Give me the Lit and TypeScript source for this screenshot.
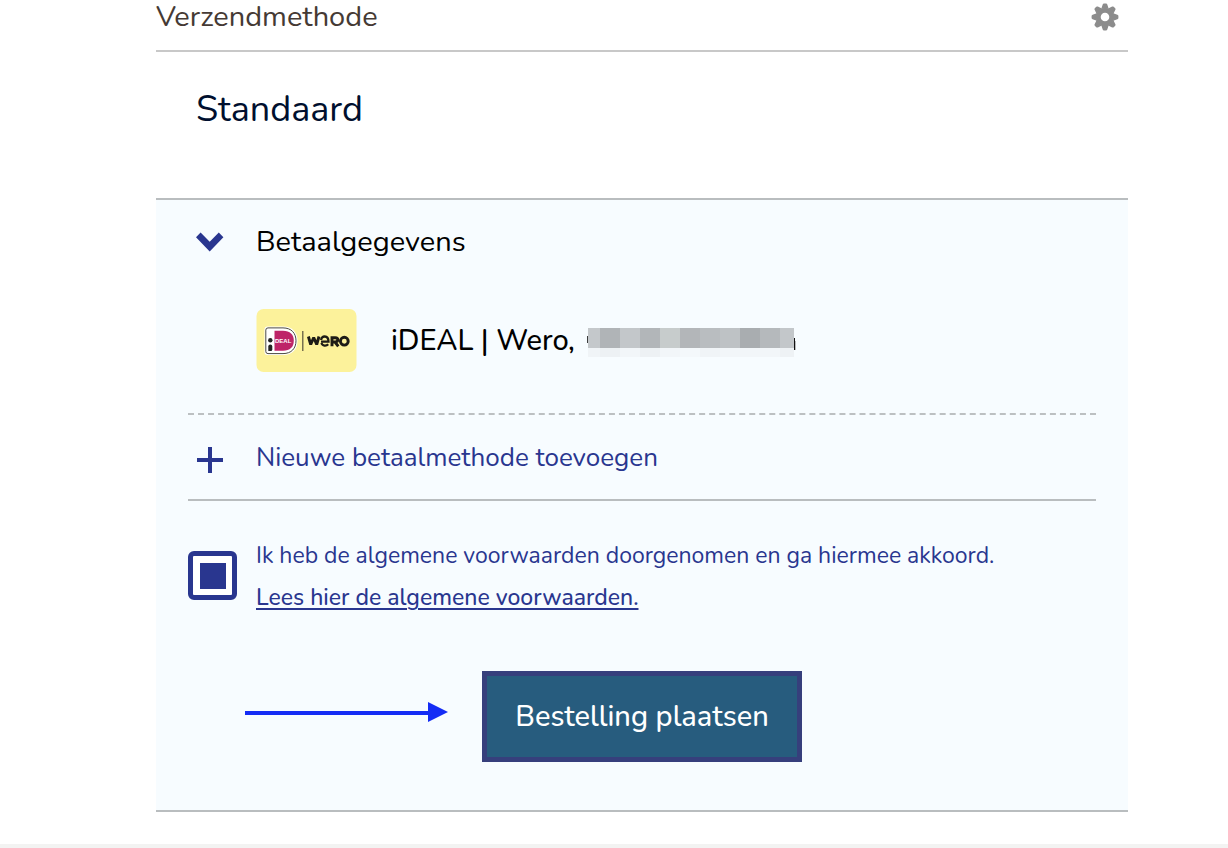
import { LitElement, html, css, svg } from "lit";
import { customElement, state } from "lit/decorators.js";

const MASK_TILES = [
  { x: 1, w: 12, fill: "#c4c8cb", low: "#f0f4f7" },
  { x: 13, w: 20, fill: "#b0b4b7", low: "#edf1f4" },
  { x: 33, w: 20, fill: "#c3c7ca", low: "#f2f6f9" },
  { x: 53, w: 20, fill: "#b2b6b9", low: "#edf1f4" },
  { x: 73, w: 20, fill: "#c7cccc", low: "#f2f6f9" },
  { x: 93, w: 20, fill: "#b3b6b9", low: "#f4f8fb" },
  { x: 113, w: 20, fill: "#b9bdc0", low: "#f0f4f7" },
  { x: 133, w: 20, fill: "#bec2c5", low: "#f2f6f9" },
  { x: 153, w: 20, fill: "#a9adb0", low: "#f2f6f9" },
  { x: 173, w: 20, fill: "#b5b9bc", low: "#f2f6f9" },
  { x: 193, w: 14, fill: "#c3c7ca", low: "#eef2f5" },
];

@customElement("app-root")
export class AppRoot extends LitElement {
  @state() private accepted = true;

  static styles = css`
    :host {
      display: block;
      background: #fff;
      font-family: Nunito, Lato, sans-serif;
      color: #000;
    }
    svg {
      display: block;
      flex: none;
    }
    h2, h3, p {
      margin: 0;
      font-weight: 400;
    }
    button {
      font: inherit;
      cursor: pointer;
      border: 0;
      padding: 0;
      background: none;
    }
    .page {
      padding: 0 100px 32px 156px;
    }
    .head {
      display: flex;
      align-items: center;
      justify-content: space-between;
      padding: 0 8px 16px 0;
      border-bottom: 2px solid #c8c8c8;
    }
    .head h2 {
      font-size: 29px;
      line-height: 34px;
      color: #453a34;
    }
    .method {
      padding: 34px 40px 64px;
      font-size: 36px;
      line-height: 48px;
      color: #000f2e;
    }
    .panel {
      padding: 22px 32px 48px;
      background: #f7fcff;
      border: solid #b9bdbf;
      border-width: 2px 0;
    }
    .row {
      display: grid;
      grid-template-columns: 44px 1fr;
      column-gap: 24px;
      align-items: center;
      width: 100%;
      text-align: left;
    }
    .row svg {
      justify-self: center;
    }
    .toggle {
      font-size: 29px;
      line-height: 40px;
      color: #000;
    }
    .payment {
      display: flex;
      align-items: center;
      padding: 47px 0 40px 68px;
      border-bottom: 2px dashed #bcc0c2;
      font-size: 29px;
      line-height: 40px;
    }
    .payment p {
      margin: 0 12px 0 34px;
      font-weight: 500;
    }
    .add {
      height: 86px;
      border-bottom: 2px solid #b9bdbf;
      font-size: 26px;
      color: #29368f;
    }
    .terms {
      display: flex;
      align-items: flex-start;
      gap: 19px;
      margin-top: 34px;
      font-size: 23px;
      line-height: 42px;
      color: #29368f;
    }
    .terms input {
      appearance: none;
      flex: none;
      box-sizing: border-box;
      width: 49px;
      height: 49px;
      margin: 16px 0 0;
      border: 5px solid #29368f;
      border-radius: 6px;
      background: #fff;
    }
    .terms input:checked {
      background: #fff linear-gradient(#29368f, #29368f) center / 26px 26px no-repeat;
    }
    .terms label {
      display: block;
    }
    .terms a {
      color: inherit;
      font-weight: 500;
      text-decoration-thickness: 2px;
      text-underline-offset: 3px;
    }
    .submit {
      display: grid;
      grid-template-columns: 1fr auto 1fr;
      align-items: center;
      column-gap: 34px;
      margin-top: 52px;
    }
    .submit svg {
      justify-self: end;
    }
    .submit button {
      padding: 19px 28px;
      border: 5px solid #363f7c;
      background: #275c7e;
      color: #fff;
      font-size: 29px;
      font-weight: 500;
      line-height: 43px;
    }
    .foot {
      height: 4px;
      background: #f3f3f2;
    }
    .logo-small {
      font: 700 6px "Liberation Sans", sans-serif;
    }
  `;

  private gear() {
    return html`<svg width="30" height="30" viewBox="0 0 30 30" aria-hidden="true">
      <g fill="#8c8c8c">
        ${[0, 45, 90, 135, 180, 225, 270, 315].map(
          (a) => svg`<path d="M11.300 6.800 12.700 2.600Q13 1.600 14 1.600h2q1 0 1.300 1l1.400 4.200z" transform="rotate(${a} 15 15)"/>`
        )}
        <path fill-rule="evenodd" d="M15 5.700a9.300 9.300 0 1 0 0 18.600 9.300 9.300 0 0 0 0-18.600zm0 5a4.300 4.300 0 1 1 0 8.600 4.300 4.300 0 0 1 0-8.600z"/>
      </g>
    </svg>`;
  }

  private logo() {
    return html`<svg width="101" height="64" viewBox="0 0 101 64" role="img" aria-label="iDEAL Wero">
      <rect width="100" height="63" x=".5" rx="7" fill="#fcf29b"/>
      <path d="M11.500 17.500h15.500C36.500 17.500 41.500 23.500 41.500 31.800S36.500 46 27 46H11.500q-3 0-3-3v-22.500q0-3 3-3z" fill="#fff"/>
      <path d="M12 18.900H27C35.500 18.900 40 24.300 40 31.800S35.500 44.600 27 44.600H12q-2.200 0-2.200-2.200v-21.300q0-2.200 2.200-2.200z" fill="#fff" stroke="#4a4940" stroke-width="1"/>
      <path d="M18.500 21.800H27c7 0 10.800 3.700 10.800 10S34 41.700 27 41.700h-8.500z" fill="#be2468"/>
      <circle cx="14.300" cy="31.200" r="2.200" fill="#222"/>
      <path d="M12.300 42v-4.500q0-2 2-2t2 2V40.500q0 1.500-1.500 1.500z" fill="#222"/>
      <text class="logo-small" x="19" y="33.700" fill="#fff">DEAL</text>
      <path d="M46.800 22v20" stroke="#55513c" stroke-width="1.200"/>
      <g fill="none" stroke="#1d1c16" stroke-width="2.900">
        <path d="M52.400 27.500 54.700 35.500 57.700 28.500 60.700 35.500 63 27.500" stroke-linejoin="bevel"/>
        <path d="M65 32.700h7.500C72.500 25.600 65 26.500 65.200 31M65.400 34c1 3.200 5 3.200 6.800 1.200" stroke-width="2.300"/>
        <path d="M76 37.300V28.700h3.300q2.500 0 2.500 2.100t-2.500 2.200h-3M79 33l3.300 4.300"/>
        <circle cx="88.300" cy="32.200" r="3.900"/>
      </g>
    </svg>`;
  }

  private mask() {
    return html`<svg width="209" height="32" viewBox="0 -2 209 32" role="img" aria-label="Afgeschermd" shape-rendering="crispEdges">
      <path d="M0 9h1v7H0z" fill="#3c3d3e"/>
      ${MASK_TILES.map(
        (t) => svg`<rect x=${t.x} y="1" width=${t.w} height="20" fill=${t.fill}/>
          <rect x=${t.x} y="21" width=${t.w} height="9" fill=${t.low}/>`
      )}
      <path d="M207 11h1v12h-1z" fill="#111"/>
      <path d="M208 14h1v9h-1z" fill="#b8babb"/>
    </svg>`;
  }

  render() {
    return html`
      <main class="page">
        <header class="head">
          <h2>Verzendmethode</h2>
          <button type="button" aria-label="Instellingen">${this.gear()}</button>
        </header>
        <p class="method">Standaard</p>

        <section class="panel">
          <h3>
            <button type="button" class="row toggle" aria-expanded="true">
              <svg width="28" height="20" viewBox="0 0 28 20" aria-hidden="true">
                <path d="M0 5.200 4.600.5 13.700 9.800 22.800.5 27.400 5.200 13.700 19.400z" fill="#29368f"/>
              </svg>
              <span>Betaalgegevens</span>
            </button>
          </h3>
          <div class="payment">
            ${this.logo()}
            <p>iDEAL | Wero,</p>
            ${this.mask()}
          </div>
          <button type="button" class="row add">
            <svg width="26" height="32" viewBox="0 0 26 32" aria-hidden="true">
              <path d="M0 19h26M13 6v26" stroke="#29368f" stroke-width="4"/>
            </svg>
            <span>Nieuwe betaalmethode toevoegen</span>
          </button>
          <div class="terms">
            <input id="accept" type="checkbox" .checked=${this.accepted}
              @change=${(e: Event) => (this.accepted = (e.target as HTMLInputElement).checked)} />
            <div>
              <label for="accept">Ik heb de algemene voorwaarden doorgenomen en ga hiermee akkoord.</label>
              <a href="#voorwaarden">Lees hier de algemene voorwaarden.</a>
            </div>
          </div>
          <div class="submit">
            <svg width="203" height="29" viewBox="0 0 203 29" aria-hidden="true">
              <path d="M0 9h183V0l20 10-20 10v-7H0z" fill="#142cf5"/>
            </svg>
            <button type="button">Bestelling plaatsen</button>
          </div>
        </section>
      </main>
      <footer class="foot"></footer>
    `;
  }
}
